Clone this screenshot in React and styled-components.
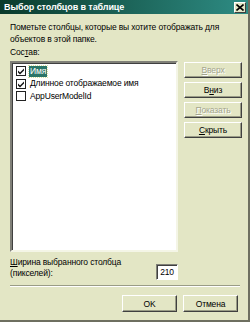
import React from 'react'
import styled, { createGlobalStyle } from 'styled-components'

const Global = createGlobalStyle`
    html, body {
        margin: 0;
        padding: 0;
        background: #e3e6c5;
    }
    * {
        box-sizing: border-box;
    }
`;

const columns = [
    { name: 'Имя', checked: true, selected: true },
    { name: 'Длинное отображаемое имя', checked: true },
    { name: 'AppUserModelId', checked: false },
];

const sideButtons = [
    { pre: '', key: 'В', post: 'верх', disabled: true },
    { pre: 'В', key: 'н', post: 'из' },
    { pre: '', key: 'П', post: 'оказать', disabled: true },
    { pre: '', key: 'С', post: 'крыть' },
];

function Check({ on }) {
    return (
        <Box>
            {on && (
                <svg width="8" height="8" viewBox="0 0 8 8">
                    <path d="M1 3.5 L3 5.5 L7 1.5 L7 3.5 L3 7.5 L1 5.5 Z" fill="#111" />
                </svg>
            )}
        </Box>
    )
}

export default function App() {
    return (
        <Window>
            <Global />
            <TitleBar>
                <Title>Выбор столбцов в таблице</Title>
                <CloseBtn>
                    <svg width="8" height="7" viewBox="0 0 8 7">
                        <path d="M0.5 0.5 L7.5 6.5 M7.5 0.5 L0.5 6.5" stroke="#000" strokeWidth="1.6" />
                    </svg>
                </CloseBtn>
            </TitleBar>
            <Body>
                <Intro>Пометьте столбцы, которые вы хотите отображать для<br />объектов в этой папке.</Intro>
                <Label>Сос<u>т</u>ав:</Label>
                <Middle>
                    <ListBox>
                        {columns.map(c => (
                            <Item key={c.name}>
                                <Check on={c.checked} />
                                <ItemText selected={c.selected}>{c.name}</ItemText>
                            </Item>
                        ))}
                    </ListBox>
                    <SideColumn>
                        {sideButtons.map(b => (
                            <Button key={b.key + b.post} disabled={b.disabled}>
                                {b.pre}<u>{b.key}</u>{b.post}
                            </Button>
                        ))}
                    </SideColumn>
                </Middle>
                <WidthRow>
                    <WidthLabel><u>Ш</u>ирина выбранного столбца<br />(пикселей):</WidthLabel>
                    <NumberField>210</NumberField>
                </WidthRow>
                <Separator />
                <Footer>
                    <Button wide>OK</Button>
                    <Button wide>Отмена</Button>
                </Footer>
            </Body>
        </Window>
    )
}

const Window = styled.div`
    width: 250px;
    height: 322px;
    display: flex;
    flex-direction: column;
    background: #e3e6c5;
    border-right: 2px solid #6e6f60;
    border-bottom: 2px solid #6e6f60;
    font-family: "Liberation Sans", Arial, sans-serif;
    font-size: 8.5px;
    letter-spacing: -0.15px;
    color: #000;
    overflow: hidden;
`;

const TitleBar = styled.div`
    height: 14px;
    display: flex;
    align-items: center;
    justify-content: space-between;
    padding: 0 2px 0 4px;
    background: linear-gradient(to right, #0a3a2b, #2e8c84);
`;

const Title = styled.div`
    color: #fff;
    font-weight: bold;
    font-size: 9px;
    letter-spacing: -0.1px;
`;

const CloseBtn = styled.div`
    width: 12px;
    height: 11px;
    display: flex;
    align-items: center;
    justify-content: center;
    background: #e3e6c5;
    border: 1px solid;
    border-color: #fff #404040 #404040 #fff;
`;

const Body = styled.div`
    flex: 1;
    display: flex;
    flex-direction: column;
    padding: 8px 6px 0 10px;
`;

const Intro = styled.div`
    line-height: 11.5px;
    white-space: nowrap;
`;

const Label = styled.div`
    line-height: 12px;
    margin-top: 1px;
`;

const Middle = styled.div`
    display: flex;
    gap: 6px;
    margin-top: 3px;
`;

const ListBox = styled.div`
    width: 168px;
    height: 191px;
    background: #fff;
    border: 2px solid;
    border-color: #808078 #f4f5e6 #f4f5e6 #808078;
    box-shadow: inset 1px 1px 0 #404040;
    padding: 2px 0 0 4px;
`;

const Item = styled.div`
    display: flex;
    align-items: center;
    height: 12.5px;
    gap: 3px;
    white-space: nowrap;
`;

const Box = styled.div`
    width: 10px;
    height: 10px;
    flex: none;
    border: 1px solid #222;
    background: #fff;
    display: flex;
    align-items: center;
    justify-content: center;
`;

const ItemText = styled.span`
    line-height: 11px;
    padding: 0 1px;
    background: ${p => (p.selected ? '#2b7569' : 'transparent')};
    color: ${p => (p.selected ? '#fff' : '#000')};
    outline: ${p => (p.selected ? '1px dotted #d8e0a0' : 'none')};
`;

const SideColumn = styled.div`
    display: flex;
    flex-direction: column;
    gap: 4px;
    padding-top: 1px;
`;

const Button = styled.div`
    width: ${p => (p.wide ? '55px' : '58px')};
    height: ${p => (p.wide ? '17px' : '16px')};
    display: flex;
    align-items: center;
    justify-content: center;
    background: #e3e6c5;
    border: 1px solid;
    border-color: #fff #404040 #404040 #fff;
    box-shadow: inset -1px -1px 0 #9a9c86;
    color: ${p => (p.disabled ? '#a3a58e' : '#000')};
    text-shadow: ${p => (p.disabled ? '1px 1px 0 #fff' : 'none')};
`;

const WidthRow = styled.div`
    display: flex;
    align-items: flex-end;
    justify-content: space-between;
    width: 168px;
    margin-top: 5px;
`;

const WidthLabel = styled.div`
    line-height: 11px;
    white-space: nowrap;
`;

const NumberField = styled.div`
    width: 22px;
    height: 16px;
    background: #fff;
    border: 1px solid;
    border-color: #808078 #fff #fff #808078;
    box-shadow: inset 1px 1px 0 #404040;
    display: flex;
    align-items: center;
    justify-content: center;
    margin-bottom: -1px;
`;

const Separator = styled.div`
    margin-top: 6px;
    width: 230px;
    height: 2px;
    border-top: 1px solid #9a9c86;
    border-bottom: 1px solid #fff;
`;

const Footer = styled.div`
    display: flex;
    justify-content: flex-end;
    gap: 6px;
    width: 228px;
    margin-top: 8px;
`;
